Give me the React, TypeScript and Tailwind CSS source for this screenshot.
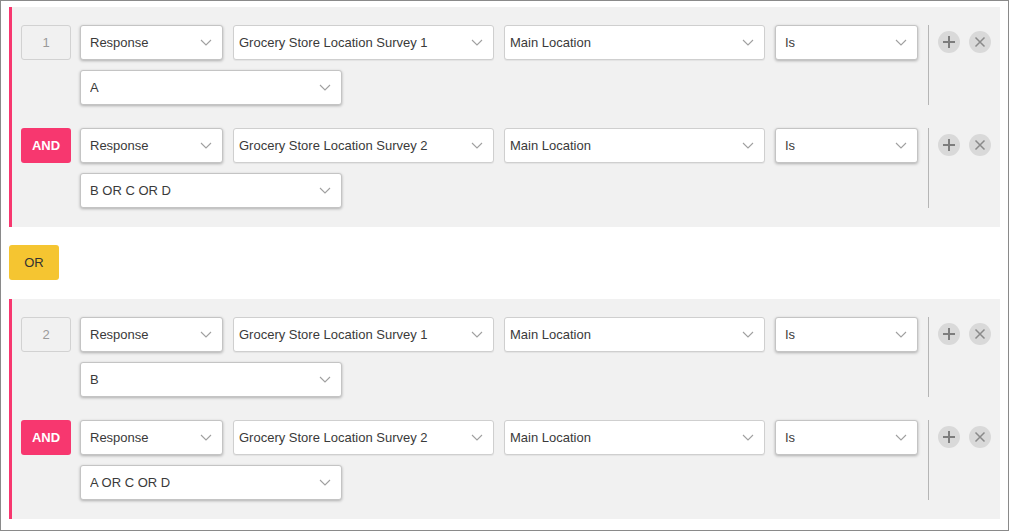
import React from "react";

type Condition = {
  survey: string;
  value: string;
};

type Group = {
  num: string;
  conditions: Condition[];
};

const GROUPS: Group[] = [
  {
    num: "1",
    conditions: [
      { survey: "Grocery Store Location Survey 1", value: "A" },
      { survey: "Grocery Store Location Survey 2", value: "B OR C OR D" },
    ],
  },
  {
    num: "2",
    conditions: [
      { survey: "Grocery Store Location Survey 1", value: "B" },
      { survey: "Grocery Store Location Survey 2", value: "A OR C OR D" },
    ],
  },
];

function Chevron() {
  return (
    <svg width="12" height="7" viewBox="0 0 12 7" fill="none" className="shrink-0">
      <path d="M1 1l5 5 5-5" stroke="#a0a0a0" strokeWidth="1.1" />
    </svg>
  );
}

function Select({
  label,
  width,
  raised,
  tight,
}: {
  label: string;
  width: string;
  raised?: boolean;
  tight?: boolean;
}) {
  return (
    <div
      className={`flex h-[35px] ${width} items-center justify-between rounded-[3px] border bg-white pr-[10px] text-[13px] text-[#3a3a3a] ${
        tight ? "pl-[5px]" : "pl-[9px]"
      } ${
        raised
          ? "border-[#c4c4c4] shadow-[0_1px_3px_rgba(0,0,0,0.28)]"
          : "border-[#cfcfcf] shadow-[0_1px_1px_rgba(0,0,0,0.06)]"
      }`}
    >
      <span className="truncate">{label}</span>
      <Chevron />
    </div>
  );
}

function RoundButton({ kind }: { kind: "plus" | "x" }) {
  return (
    <div className="flex h-[22px] w-[22px] items-center justify-center rounded-full bg-[#d9d9d9]">
      {kind === "plus" ? (
        <svg width="14" height="14" viewBox="0 0 14 14">
          <path d="M7 1v12M1 7h12" stroke="#7d7d7d" strokeWidth="2" />
        </svg>
      ) : (
        <svg width="12" height="12" viewBox="0 0 12 12">
          <path d="M1.5 1.5l9 9M10.5 1.5l-9 9" stroke="#8a8a8a" strokeWidth="1.5" />
        </svg>
      )}
    </div>
  );
}

function ConditionRow({ tag, cond, first }: { tag: string; cond: Condition; first: boolean }) {
  return (
    <div className="flex items-start">
      {first ? (
        <div className="flex h-[35px] w-[50px] items-center justify-center rounded-[3px] border border-[#d2d2d2] text-[13px] text-[#9a9a9a]">
          {tag}
        </div>
      ) : (
        <div className="flex h-[35px] w-[50px] items-center justify-center rounded-[3px] bg-[#f7376f] text-[13px] font-bold text-white">
          AND
        </div>
      )}
      <div className="ml-[9px] flex w-[839px] flex-wrap gap-[10px]">
        <Select label="Response" width="w-[143px]" raised />
        <Select label={cond.survey} width="w-[261px]" tight />
        <Select label="Main Location" width="w-[261px]" tight />
        <Select label="Is" width="w-[143px]" raised />
        <Select label={cond.value} width="w-[262px]" raised />
      </div>
      <div className="ml-[9px] h-[80px] w-px bg-[#b5b5b5]" />
      <div className="ml-[9px] flex gap-[9px] pt-[6px]">
        <RoundButton kind="plus" />
        <RoundButton kind="x" />
      </div>
    </div>
  );
}

function GroupBox({ group }: { group: Group }) {
  return (
    <div className="flex flex-col gap-[23px] border-l-[3px] border-[#f7376f] bg-[#f1f1f1] pb-[19px] pl-[9px] pt-[18px]">
      {group.conditions.map((c, i) => (
        <ConditionRow key={i} tag={group.num} cond={c} first={i === 0} />
      ))}
    </div>
  );
}

export default function App() {
  return (
    <div className="h-[531px] w-[1009px] border border-[#8a8a8a] bg-white px-[8px] pt-[6px] font-['Liberation_Sans',Arial,sans-serif]">
      <GroupBox group={GROUPS[0]} />
      <div className="pb-[19px] pt-[18px]">
        <div className="flex h-[35px] w-[50px] items-center justify-center rounded-[3px] bg-[#f5c531] text-[13px] text-[#333]">
          OR
        </div>
      </div>
      <GroupBox group={GROUPS[1]} />
    </div>
  );
}
